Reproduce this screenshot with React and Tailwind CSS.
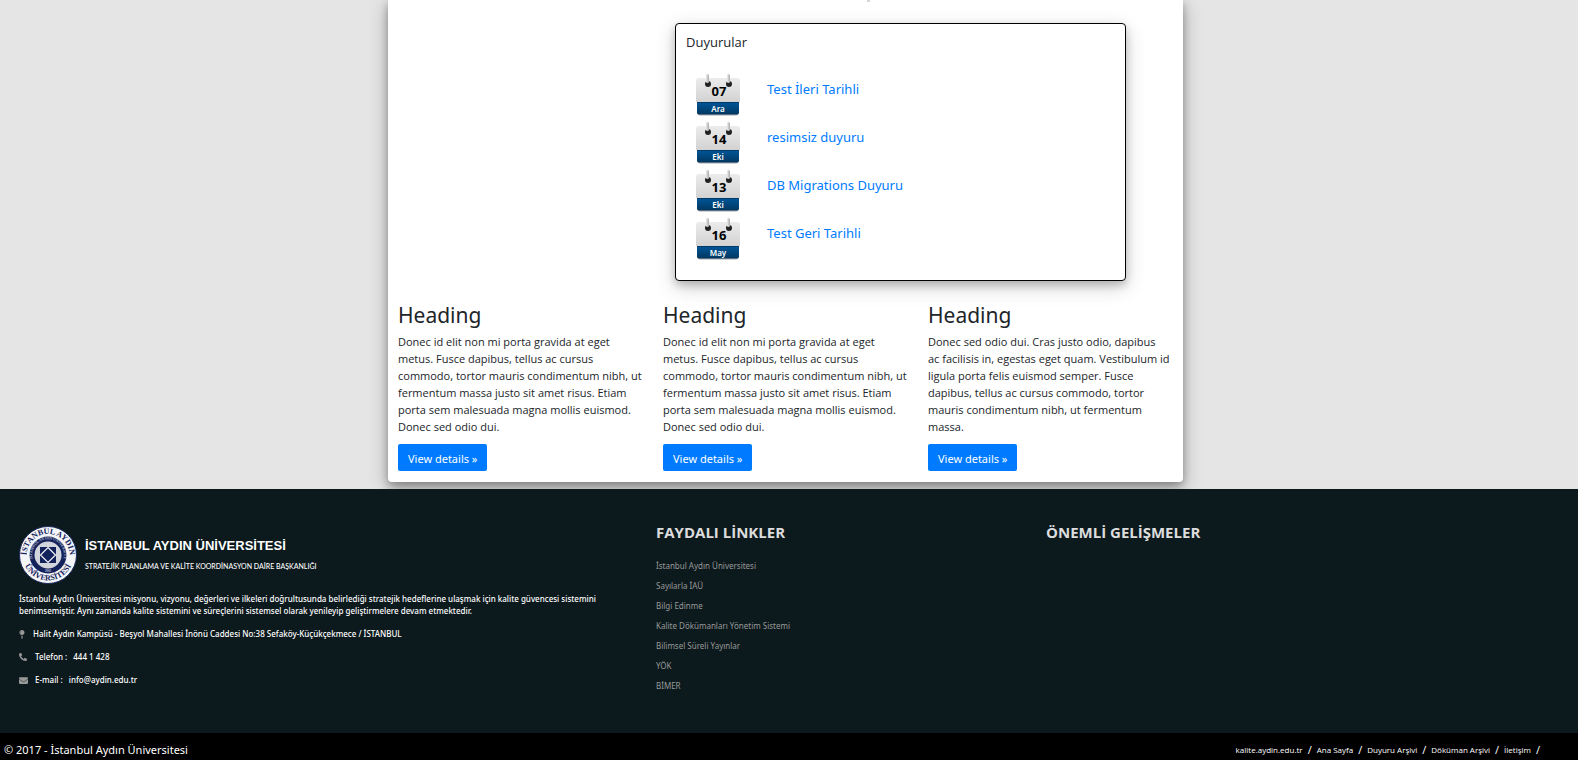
import { FaMapPin, FaPhone, FaEnvelope } from "react-icons/fa";

const announcements = [
  { day: "07", month: "Ara", title: "Test İleri Tarihli" },
  { day: "14", month: "Eki", title: "resimsiz duyuru" },
  { day: "13", month: "Eki", title: "DB Migrations Duyuru" },
  { day: "16", month: "May", title: "Test Geri Tarihli" },
];

const donec = `Donec id elit non mi porta gravida at eget
metus. Fusce dapibus, tellus ac cursus
commodo, tortor mauris condimentum nibh, ut
fermentum massa justo sit amet risus. Etiam
porta sem malesuada magna mollis euismod.
Donec sed odio dui.`;

const columns = [
  donec,
  donec,
  `Donec sed odio dui. Cras justo odio, dapibus
ac facilisis in, egestas eget quam. Vestibulum id
ligula porta felis euismod semper. Fusce
dapibus, tellus ac cursus commodo, tortor
mauris condimentum nibh, ut fermentum
massa.`,
];

const usefulLinks = [
  "İstanbul Aydın Üniversitesi",
  "Sayılarla İAÜ",
  "Bilgi Edinme",
  "Kalite Dökümanları Yönetim Sistemi",
  "Bilimsel Süreli Yayınlar",
  "YÖK",
  "BİMER",
];

const bottomLinks = ["kalite.aydin.edu.tr", "Ana Sayfa", "Duyuru Arşivi", "Döküman Arşivi", "İletişim"];

function DateBadge({ day, month }) {
  return (
    <div className="relative h-[43px] w-11 shrink-0 text-center">
      <svg viewBox="0 0 44 43" className="block h-full w-full" aria-hidden="true">
        <defs>
          <linearGradient id="paper" x1="0" y1="0" x2="0" y2="1">
            <stop offset="0" stopColor="#ececec" />
            <stop offset="1" stopColor="#d2d2d2" />
          </linearGradient>
          <linearGradient id="band" x1="0" y1="0" x2="0" y2="1">
            <stop offset="0" stopColor="#00579a" />
            <stop offset="1" stopColor="#00375f" />
          </linearGradient>
          <linearGradient id="ring" x1="0" y1="0" x2="1" y2="0">
            <stop offset="0" stopColor="#ededed" />
            <stop offset="1" stopColor="#a9a9a9" />
          </linearGradient>
        </defs>
        <rect x="1" y="30" width="42" height="11.500" rx="3" fill="#a8a8a8" />
        <path d="M3 4h38a3 3 0 0 1 3 3v21H0V7a3 3 0 0 1 3-3z" fill="url(#paper)" />
        <path d="M1 28h42v10a2.500 2.500 0 0 1-2.500 2.500h-37A2.500 2.500 0 0 1 1 38z" fill="url(#band)" />
        <rect x="1" y="28" width="42" height="1" fill="#003a66" />
        <circle cx="12" cy="10" r="3" fill="#222" />
        <circle cx="33" cy="10" r="3" fill="#222" />
        <rect x="10" y="0" width="3" height="9" rx="1.500" fill="url(#ring)" />
        <rect x="31" y="0" width="3" height="9" rx="1.500" fill="url(#ring)" />
      </svg>
      <span className="absolute inset-x-0 top-2 pl-0.5 text-[13px] leading-[18px] font-bold text-black">{day}</span>
      <span className="absolute inset-x-0 top-[29px] text-[8px] leading-3 font-semibold text-white">{month}</span>
    </div>
  );
}

function Seal() {
  return (
    <svg viewBox="0 0 58 58" className="h-[58px] w-[58px] shrink-0" role="img" aria-label="İstanbul Aydın Üniversitesi">
      <defs>
        <path id="outerTop" d="M8 34A21.500 21.500 0 1 1 50 34" />
        <path id="outerBottom" d="M4.500 36A25.500 25.500 0 0 0 53.500 36" />
        <path id="innerTop" d="M16 38.500A16 16 0 1 1 42 38.500" />
      </defs>
      <circle cx="29" cy="29" r="28.500" fill="#f4f5f8" stroke="#1b2a5e" strokeWidth="1" />
      <circle cx="29" cy="29" r="18.500" fill="#14225c" />
      <g fontFamily="'Liberation Serif', serif" fontWeight="700" fill="#14225c" fontSize="8" textAnchor="middle">
        <text><textPath href="#outerTop" startOffset="50%">İSTANBUL AYDIN</textPath></text>
        <text><textPath href="#outerBottom" startOffset="50%">ÜNİVERSİTESİ</textPath></text>
      </g>
      <text fontFamily="'Liberation Serif', serif" fontSize="4" fill="#e4e6ee" textAnchor="middle">
        <textPath href="#innerTop" startOffset="50%">İSTANBUL AYDIN UNIVERSITY</textPath>
      </text>
      <circle cx="29" cy="29" r="13.500" fill="#d3d5dc" />
      <path d="M21 21h16v16H21z" fill="#14225c" />
      <path d="M29 21.500l7.500 7.500-7.500 7.500-7.500-7.500z" fill="#14225c" stroke="#f4f5f8" strokeWidth="1.200" />
      <text x="29" y="46" fontFamily="'Liberation Serif', serif" fontSize="3" fill="#fff" textAnchor="middle">2003</text>
    </svg>
  );
}

export default function App() {
  return (
    <div className="bg-[#e5e5e5] font-['Noto_Sans',sans-serif] text-[#212529]">
      <main className="pr-[7px] pb-[7px]">
        <div className="mx-auto w-full max-w-[795px] rounded-b bg-white pb-[11px] shadow-[0_4px_8px_rgba(0,0,0,0.3),0_6px_20px_rgba(0,0,0,0.25)]">
          <div className="flex h-[23px] justify-end pr-[313px]">
            <span className="h-0.5 w-[3px] bg-[#d8d8d8]" />
          </div>
          <section className="mr-[57px] ml-[287px] h-[258px] rounded border border-black bg-white px-2.5 pt-2 shadow-[0_4px_8px_rgba(0,0,0,0.2),0_6px_20px_rgba(0,0,0,0.19)]">
            <h2 className="font-['Open_Sans',sans-serif] text-[13px] leading-5 font-medium">Duyurular</h2>
            <ul className="mt-[22px] flex flex-col gap-[5px] pl-2.5">
              {announcements.map((a) => (
                <li key={a.title} className="flex gap-[27px]">
                  <DateBadge day={a.day} month={a.month} />
                  <a href="#" className="pt-[5px] text-[13px] leading-5 text-[#007bff]">{a.title}</a>
                </li>
              ))}
            </ul>
          </section>
          <div className="mt-5 grid grid-cols-3">
            {columns.map((text, i) => (
              <section key={i} className="px-2.5">
                <h2 className="text-[21px] leading-7">Heading</h2>
                <p className="mt-1 font-['Open_Sans',sans-serif] text-[11px] leading-[17px] whitespace-pre-line">{text}</p>
                <a href="#" className="mt-[9px] inline-block rounded-[2px] bg-[#007bff] px-2.5 pt-1.5 pb-1 text-[11px] leading-[17px] text-white">
                  View details »
                </a>
              </section>
            ))}
          </div>
        </div>
      </main>

      <footer className="relative bg-[#0c191d] font-['Open_Sans',sans-serif]">
        <div className="flex h-[244px] pt-[33px] pl-[19px] text-[8px] text-white">
          <div className="w-[637px] pt-1 pr-10 font-['Noto_Sans',sans-serif] font-medium">
            <div className="flex gap-2">
              <Seal />
              <div className="pt-3">
                <p className="font-['Liberation_Sans',sans-serif] text-[13px] leading-4 font-bold">İSTANBUL AYDIN ÜNİVERSİTESİ</p>
                <p className="mt-1.5 font-['Lato',sans-serif] text-[7px] leading-3">
                  STRATEJİK PLANLAMA VE KALİTE KOORDİNASYON DAİRE BAŞKANLIĞI
                </p>
              </div>
            </div>
            <p className="mt-[9px] leading-3">
              İstanbul Aydın Üniversitesi misyonu, vizyonu, değerleri ve ilkeleri doğrultusunda belirlediği stratejik hedeflerine ulaşmak için kalite güvencesi sistemini benimsemiştir. Aynı zamanda kalite sistemini ve süreçlerini sistemsel olarak yenileyip geliştirmelere devam etmektedir.
            </p>
            <address className="mt-[11px] flex flex-col gap-[11px] leading-3 not-italic">
              <p className="flex items-center gap-2"><FaMapPin className="w-1.5 text-[#999]" size={9} />Halit Aydın Kampüsü - Beşyol Mahallesi İnönü Caddesi No:38 Sefaköy-Küçükçekmece / İSTANBUL</p>
              <p className="flex items-center"><FaPhone className="mr-2 scale-x-[-1] text-[#999]" size={8} /><span className="mr-1.5">Telefon :</span>444 1 428</p>
              <p className="flex items-center"><FaEnvelope className="mr-[7px] text-[#999]" size={9} /><span className="mr-1.5">E-mail :</span><a href="#">info@aydin.edu.tr</a></p>
            </address>
          </div>
          <nav className="w-[390px]" aria-labelledby="useful">
            <h2 id="useful" className="text-[15px] leading-5 font-bold text-[#ddd]">FAYDALI LİNKLER</h2>
            <ul className="mt-3.5 font-['Noto_Sans',sans-serif] text-[8px] leading-5 text-[#999]">
              {usefulLinks.map((l) => (
                <li key={l}><a href="#">{l}</a></li>
              ))}
            </ul>
          </nav>
          <section>
            <h2 className="text-[15px] leading-5 font-bold text-[#ddd]">ÖNEMLİ GELİŞMELER</h2>
          </section>
        </div>
        <div className="flex h-[27px] items-center justify-between bg-black pt-[7px] pr-[38px] pl-1 text-[11px] text-white">
          <p className="font-['Noto_Sans',sans-serif]">© 2017 - İstanbul Aydın Üniversitesi</p>
          <ul className="flex items-center gap-[5px]">
            {bottomLinks.map((l) => (
              <li key={l} className="flex items-center gap-[5px]">
                <a href="#" className="text-[8px]">{l}</a>
                <span>/</span>
              </li>
            ))}
          </ul>
        </div>
      </footer>
    </div>
  );
}
